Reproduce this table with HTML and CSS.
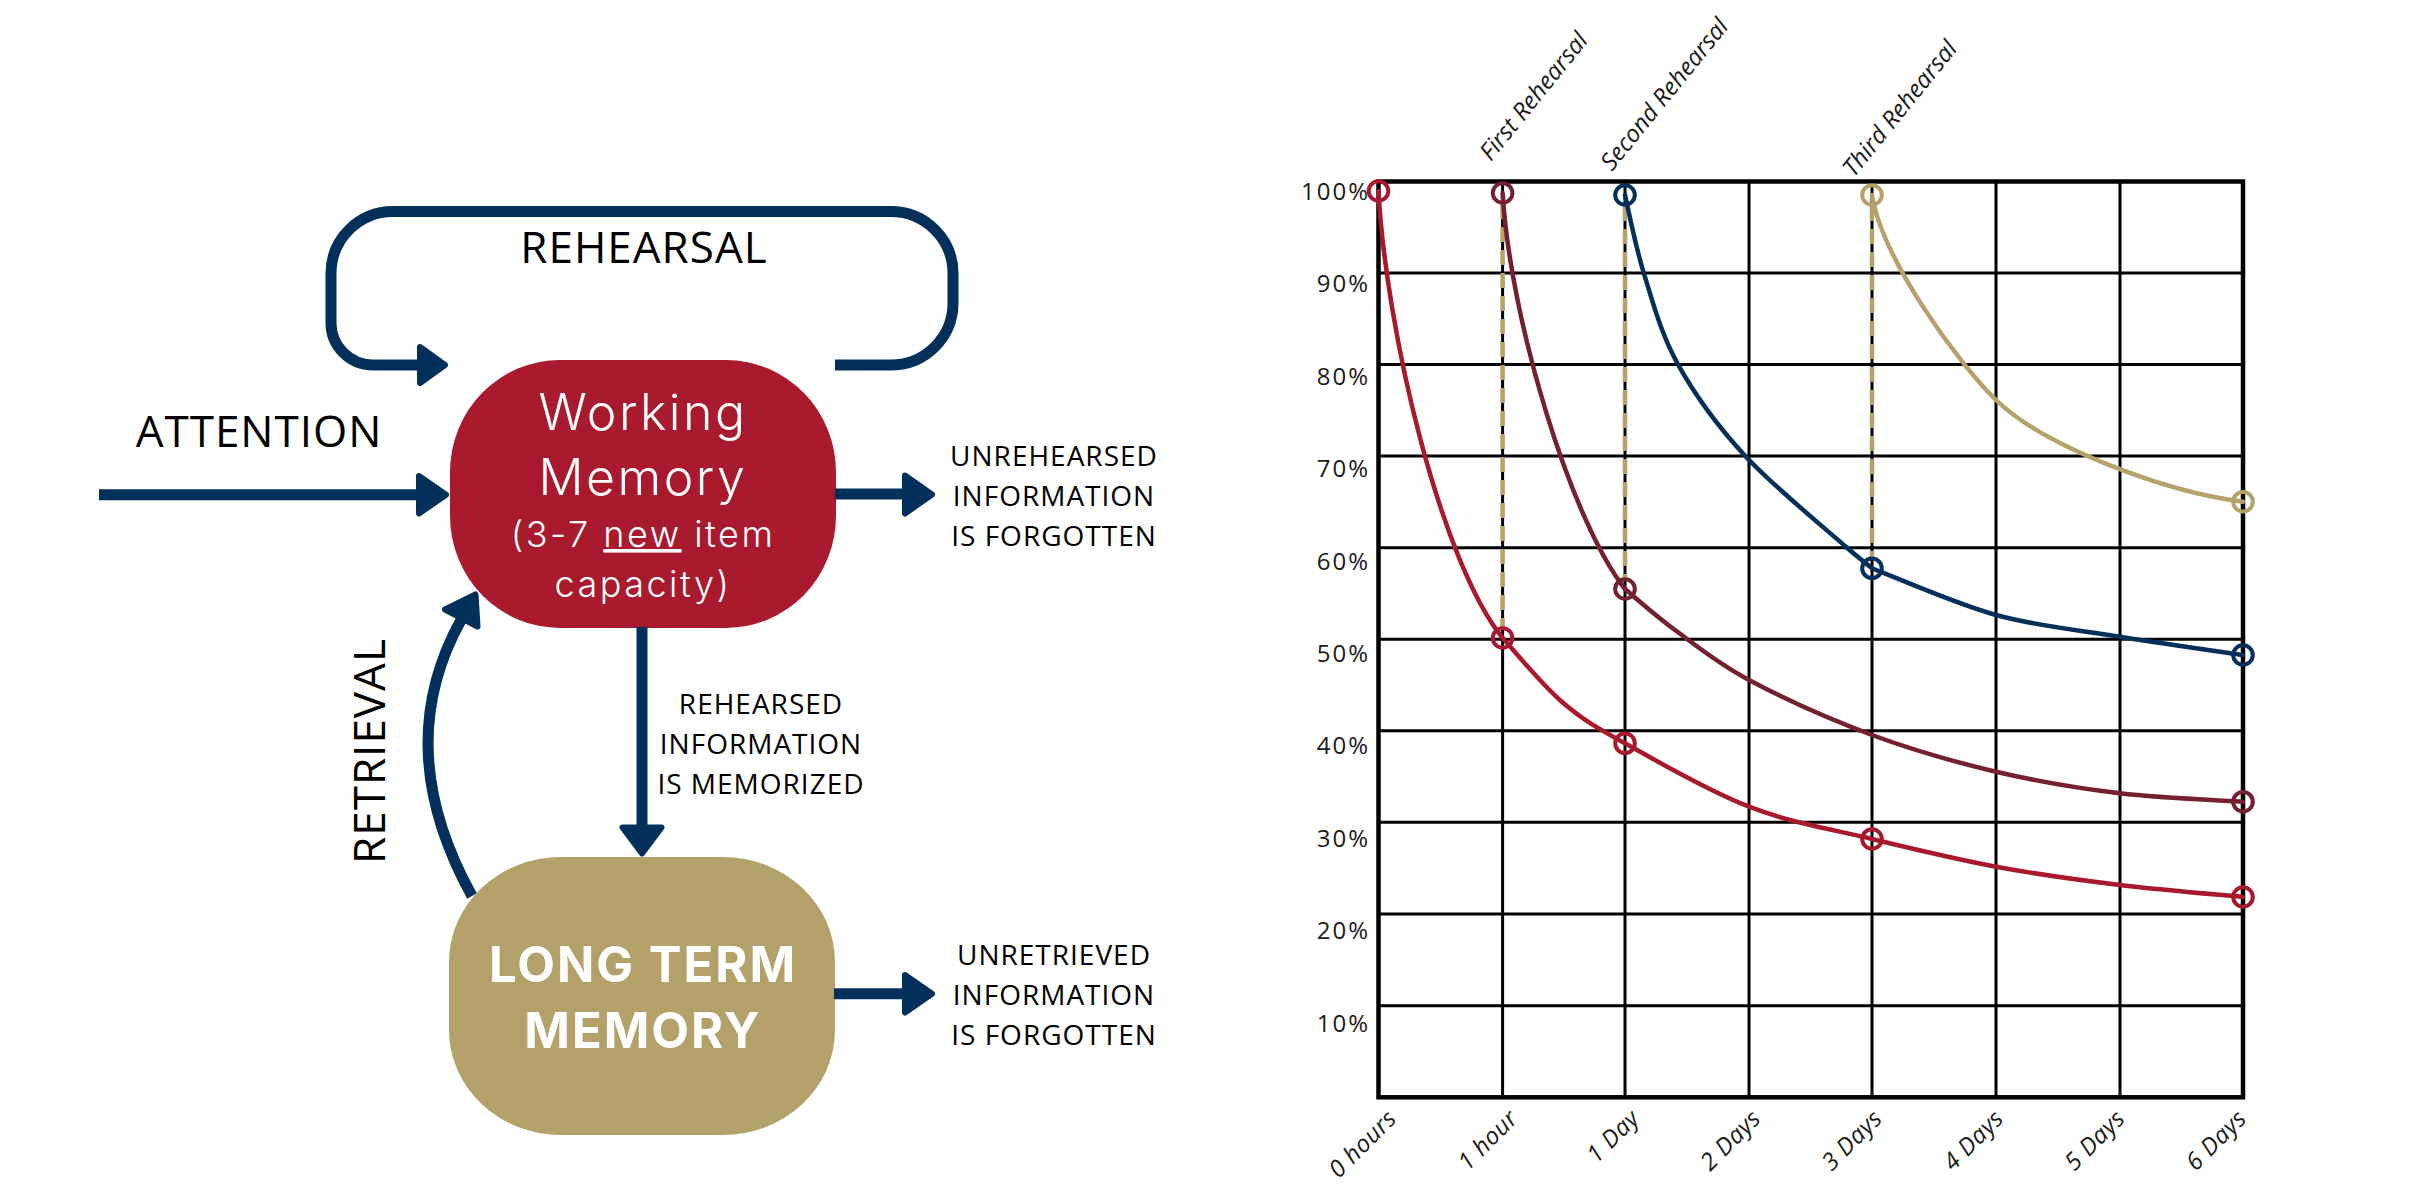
FILE: index.html
```html
<!DOCTYPE html>
<html lang="en">
<head>
<meta charset="utf-8">
<title>Memory model and forgetting curve</title>
<link rel="stylesheet" href="styles.css">
</head>
<body>
<div class="page">
  <section class="panel panel-diagram">
    <svg class="canvas" viewBox="0 0 1220 1188" width="1220" height="1188" xmlns="http://www.w3.org/2000/svg">
      <!-- rehearsal loop -->
      <path class="navy-line" d="M420,365 H373 A42,42 0 0 1 331,323 V273.5 A62,62 0 0 1 393,211.5 H891 A62,62 0 0 1 953,273.5 V303 A62,62 0 0 1 891,365 H835"/>
      <polygon class="navy-head" points="420,347 445,365 420,383"/>
      <text class="lbl" x="644" y="263">REHEARSAL</text>

      <!-- attention -->
      <line class="navy-line" x1="99" y1="494.7" x2="421" y2="494.7"/>
      <polygon class="navy-head" points="419,476 446,494.7 419,513.5"/>
      <text class="lbl" x="259" y="447">ATTENTION</text>

      <!-- retrieval -->
      <path class="navy-line" d="M472,896 Q390,748 461,620"/>
      <polygon class="navy-head" points="445,609.5 475.5,594.5 477.5,626.5"/>
      <text class="lbl" transform="translate(385,751) rotate(-90)" x="0" y="0">RETRIEVAL</text>

      <!-- working memory -->
      <rect class="wm-box" x="450" y="360" width="386" height="268" rx="110" ry="112"/>
      <text class="wm-text wm-big" x="643" y="430">Working</text>
      <text class="wm-text wm-big" x="643" y="495">Memory</text>
      <text class="wm-text wm-small" x="643" y="547">(3-7 <tspan class="ul">new</tspan> item</text>
      <text class="wm-text wm-small" x="643" y="597">capacity)</text>

      <!-- unrehearsed -->
      <line class="navy-line" x1="835" y1="494" x2="907" y2="494"/>
      <polygon class="navy-head" points="905,475.5 932,494.5 905,513.5"/>
      <text class="note" x="1054" y="466">UNREHEARSED</text>
      <text class="note" x="1054" y="506">INFORMATION</text>
      <text class="note" x="1054" y="546">IS FORGOTTEN</text>

      <!-- memorized -->
      <line class="navy-line" x1="642" y1="627" x2="642" y2="829"/>
      <polygon class="navy-head" points="622.5,827.5 661.5,827.5 642,853.5"/>
      <text class="note" x="761" y="714">REHEARSED</text>
      <text class="note" x="761" y="754">INFORMATION</text>
      <text class="note" x="761" y="794">IS MEMORIZED</text>

      <!-- long term memory -->
      <rect class="ltm-box" x="449" y="857" width="386" height="278" rx="112" ry="105"/>
      <text class="ltm-text" x="643" y="982">LONG TERM</text>
      <text class="ltm-text" x="643" y="1048">MEMORY</text>

      <!-- unretrieved -->
      <line class="navy-line" x1="834" y1="993.8" x2="907" y2="993.8"/>
      <polygon class="navy-head" points="905,975 932,993.8 905,1012.5"/>
      <text class="note" x="1054" y="965">UNRETRIEVED</text>
      <text class="note" x="1054" y="1005">INFORMATION</text>
      <text class="note" x="1054" y="1045">IS FORGOTTEN</text>
    </svg>
  </section>

  <section class="panel panel-chart">
    <svg class="canvas" viewBox="1220 0 1190 1188" width="1190" height="1188" xmlns="http://www.w3.org/2000/svg">
      <!-- grid -->
      <g class="grid">
        <line class="grid-line" x1="1502.6" y1="181.5" x2="1502.6" y2="1097.3"/>
        <line class="grid-line" x1="1625" y1="181.5" x2="1625" y2="1097.3"/>
        <line class="grid-line" x1="1749" y1="181.5" x2="1749" y2="1097.3"/>
        <line class="grid-line" x1="1872" y1="181.5" x2="1872" y2="1097.3"/>
        <line class="grid-line" x1="1996" y1="181.5" x2="1996" y2="1097.3"/>
        <line class="grid-line" x1="2120" y1="181.5" x2="2120" y2="1097.3"/>
        <line class="grid-line" x1="1378.5" y1="273" x2="2243" y2="273"/>
        <line class="grid-line" x1="1378.5" y1="364.5" x2="2243" y2="364.5"/>
        <line class="grid-line" x1="1378.5" y1="456" x2="2243" y2="456"/>
        <line class="grid-line" x1="1378.5" y1="547.7" x2="2243" y2="547.7"/>
        <line class="grid-line" x1="1378.5" y1="639.3" x2="2243" y2="639.3"/>
        <line class="grid-line" x1="1378.5" y1="730.7" x2="2243" y2="730.7"/>
        <line class="grid-line" x1="1378.5" y1="822.3" x2="2243" y2="822.3"/>
        <line class="grid-line" x1="1378.5" y1="914" x2="2243" y2="914"/>
        <line class="grid-line" x1="1378.5" y1="1005.7" x2="2243" y2="1005.7"/>
        <rect class="grid-frame" x="1378.5" y="181.5" width="864.5" height="915.8"/>
      </g>

      <!-- rehearsal guides -->
      <line class="dash" x1="1502.6" y1="204" x2="1502.6" y2="628"/>
      <line class="dash" x1="1625" y1="206" x2="1625" y2="579"/>
      <line class="dash" x1="1872" y1="206" x2="1872" y2="558"/>

      <!-- curves -->
      <path class="curve c-red" d="M1378.5,191 C1386,330 1440,560 1502.6,638"/>
      <path class="curve c-red" d="M1502.6,638 C1512.5,648.6 1541.4,684.2 1561.8,701.7 C1582.2,719.3 1593.8,725.8 1625,743.3 C1656.2,760.8 1707.8,790.8 1749,806.7 C1790.2,822.7 1830.8,829 1872,839 C1913.2,849 1954.7,859 1996,866.7 C2037.3,874.4 2078.8,880 2120,885 C2161.2,890.1 2222.5,895 2243,897"/>
      <path class="curve c-maroon" d="M1502.6,193 C1510,318 1570,519 1625,589"/>
      <path class="curve c-maroon" d="M1625,589 C1633.3,595.8 1654.3,614.8 1675,630 C1695.7,645.2 1716.2,662.5 1749,680 C1781.8,697.5 1830.8,719.7 1872,735 C1913.2,750.3 1954.7,762 1996,771.7 C2037.3,781.4 2078.8,788.3 2120,793.3 C2161.2,798.3 2222.5,800.3 2243,801.7"/>
      <path class="curve c-navy" d="M1625,195 C1628.1,207.9 1634.9,244.3 1643.6,272.3 C1652.3,300.4 1660.5,332.7 1677.4,363.3 C1694.3,393.9 1716.7,425 1745,455.7 C1773.3,486.4 1825.8,528.9 1847,547.7 C1852,552 1866,563.5 1872,568.3"/>
      <path class="curve c-navy" d="M1872,568.3 C1892.7,576.1 1954.7,603.6 1996,615 C2037.3,626.4 2078.8,630 2120,636.7 C2161.2,643.4 2222.5,652 2243,655"/>
      <path class="curve c-gold" d="M1872,195 C1883,262 1961,366 1996,400 C2044,446.5 2165,492 2243,501.7"/>

      <!-- markers -->
      <circle class="dot c-red" cx="1378.5" cy="191" r="9.8"/>
      <circle class="dot c-red" cx="1502.6" cy="638" r="9.8"/>
      <circle class="dot c-red" cx="1625" cy="743.3" r="9.8"/>
      <circle class="dot c-red" cx="1872" cy="839" r="9.8"/>
      <circle class="dot c-red" cx="2243" cy="897" r="9.8"/>
      <circle class="dot c-maroon" cx="1502.6" cy="193" r="9.8"/>
      <circle class="dot c-maroon" cx="1625" cy="589" r="9.8"/>
      <circle class="dot c-maroon" cx="2243" cy="801.7" r="9.8"/>
      <circle class="dot c-navy" cx="1625" cy="195" r="9.8"/>
      <circle class="dot c-navy" cx="1872" cy="568.3" r="9.8"/>
      <circle class="dot c-navy" cx="2243" cy="655" r="9.8"/>
      <circle class="dot c-gold" cx="1872" cy="195" r="9.8"/>
      <circle class="dot c-gold" cx="2243" cy="501.7" r="9.8"/>

      <!-- y axis -->
      <text class="ylab" x="1370" y="200">100%</text>
      <text class="ylab" x="1370" y="292.4">90%</text>
      <text class="ylab" x="1370" y="384.8">80%</text>
      <text class="ylab" x="1370" y="477.2">70%</text>
      <text class="ylab" x="1370" y="569.6">60%</text>
      <text class="ylab" x="1370" y="662">50%</text>
      <text class="ylab" x="1370" y="754.4">40%</text>
      <text class="ylab" x="1370" y="846.8">30%</text>
      <text class="ylab" x="1370" y="939.2">20%</text>
      <text class="ylab" x="1370" y="1031.6">10%</text>

      <!-- x axis -->
      <text class="xlab" transform="translate(1398,1120) rotate(-45)">0 hours</text>
      <text class="xlab" transform="translate(1519.4,1120) rotate(-45)">1 hour</text>
      <text class="xlab" transform="translate(1640.8,1120) rotate(-45)">1 Day</text>
      <text class="xlab" transform="translate(1762.2,1120) rotate(-45)">2 Days</text>
      <text class="xlab" transform="translate(1883.6,1120) rotate(-45)">3 Days</text>
      <text class="xlab" transform="translate(2005,1120) rotate(-45)">4 Days</text>
      <text class="xlab" transform="translate(2126.4,1120) rotate(-45)">5 Days</text>
      <text class="xlab" transform="translate(2247.8,1120) rotate(-45)">6 Days</text>

      <!-- rehearsal labels -->
      <text class="tlab" transform="translate(1491,162) rotate(-51)">First Rehearsal</text>
      <text class="tlab" transform="translate(1612,172) rotate(-51)">Second Rehearsal</text>
      <text class="tlab" transform="translate(1854,178) rotate(-51)">Third Rehearsal</text>
    </svg>
  </section>
</div>
</body>
</html>
```

FILE: styles.css
```css
html, body {
  margin: 0;
  padding: 0;
  background: #ffffff;
}

.page {
  display: flex;
  width: 2410px;
  height: 1188px;
  overflow: hidden;
  background: #ffffff;
}

.panel-diagram {
  flex: 0 0 1220px;
}

.panel-chart {
  flex: 0 0 1190px;
}

.canvas {
  display: block;
}

/* ---------- diagram ---------- */
.navy-line {
  fill: none;
  stroke: #03305a;
  stroke-width: 11;
  stroke-linecap: butt;
}

.navy-head {
  fill: #03305a;
  stroke: #03305a;
  stroke-width: 6;
  stroke-linejoin: round;
}

.wm-box {
  fill: #a91a2e;
}

.ltm-box {
  fill: #b4a16a;
}

.lbl {
  font-family: "Open Sans", "DejaVu Sans", sans-serif;
  font-size: 44px;
  letter-spacing: 1px;
  fill: #000000;
  text-anchor: middle;
}

.note {
  font-family: "Open Sans", "DejaVu Sans", sans-serif;
  font-size: 28px;
  letter-spacing: 1px;
  fill: #000000;
  text-anchor: middle;
}

.wm-text {
  font-family: "Inter", "Open Sans", sans-serif;
  font-weight: 300;
  fill: #ffffff;
  text-anchor: middle;
}

.wm-big {
  font-size: 50px;
  letter-spacing: 2.5px;
}

.wm-small {
  font-size: 36px;
  letter-spacing: 2.5px;
}

.ul {
  text-decoration: underline;
}

.ltm-text {
  font-family: "Inter", "Open Sans", sans-serif;
  font-weight: 700;
  font-size: 49px;
  letter-spacing: 2px;
  fill: #ffffff;
  text-anchor: middle;
}

/* ---------- chart ---------- */
.grid-line {
  stroke: #000000;
  stroke-width: 3;
}

.grid-frame {
  fill: none;
  stroke: #000000;
  stroke-width: 4.5;
}

.dash {
  stroke: #b5a26b;
  stroke-width: 4.5;
  stroke-dasharray: 15 8;
}

.curve {
  fill: none;
  stroke-width: 4.5;
  stroke-linecap: round;
}

.dot {
  fill: none;
  stroke-width: 4;
}

.c-red { stroke: #a8192e; }
.c-maroon { stroke: #74212f; }
.c-navy { stroke: #02305a; }
.c-gold { stroke: #b5a26b; }

.ylab {
  font-family: "Open Sans", "DejaVu Sans", sans-serif;
  font-size: 24px;
  letter-spacing: 2px;
  fill: #1a1a1a;
  text-anchor: end;
}

.xlab {
  font-family: "Open Sans", "DejaVu Sans", sans-serif;
  font-style: italic;
  font-size: 24px;
  letter-spacing: 0.5px;
  fill: #1a1a1a;
  text-anchor: end;
}

.tlab {
  font-family: "Open Sans", "DejaVu Sans", sans-serif;
  font-style: italic;
  font-size: 24px;
  fill: #1a1a1a;
  text-anchor: start;
}
```
